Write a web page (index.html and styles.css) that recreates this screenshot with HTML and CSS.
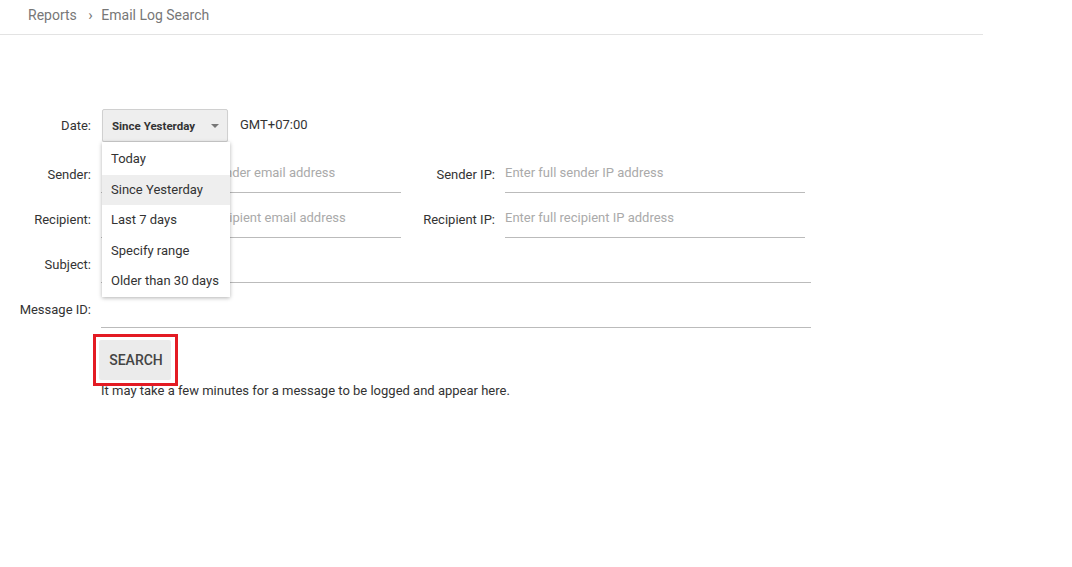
FILE: index.html
```html
<!DOCTYPE html>
<html lang="en">
<head>
    <meta charset="UTF-8">
    <meta name="viewport" content="width=device-width, initial-scale=1.0">
    <title>Email Log Search</title>
    <link rel="stylesheet" href="styles.css">
</head>
<body>
    <div class="header">
        <span class="crumb">Reports</span>
        <span class="crumb-sep">&#8250;</span>
        <span class="crumb current">Email Log Search</span>
    </div>

    <form class="search-form">
        <div class="row date-row">
            <label class="label">Date:</label>
            <div class="select-wrap">
                <div class="select">
                    <span>Since Yesterday</span>
                    <span class="arrow"></span>
                </div>
                <ul class="menu">
                    <li>Today</li>
                    <li class="active">Since Yesterday</li>
                    <li>Last 7 days</li>
                    <li>Specify range</li>
                    <li>Older than 30 days</li>
                </ul>
            </div>
            <span class="tz">GMT+07:00</span>
        </div>

        <div class="row">
            <label class="label">Sender:</label>
            <input class="field left" type="text" placeholder="Enter sender email address">
            <label class="label label-ip">Sender IP:</label>
            <input class="field" type="text" placeholder="Enter full sender IP address">
        </div>

        <div class="row">
            <label class="label">Recipient:</label>
            <input class="field left" type="text" placeholder="Enter recipient email address">
            <label class="label label-ip">Recipient IP:</label>
            <input class="field" type="text" placeholder="Enter full recipient IP address">
        </div>

        <div class="row">
            <label class="label">Subject:</label>
            <input class="field wide" type="text">
        </div>

        <div class="row">
            <label class="label">Message ID:</label>
            <input class="field wide" type="text">
        </div>

        <div class="actions">
            <div class="btn-wrap">
                <button type="button" class="btn">SEARCH</button>
                <span class="highlight"></span>
            </div>
            <p class="note">It may take a few minutes for a message to be logged and appear here.</p>
        </div>
    </form>
</body>
</html>
```

FILE: styles.css
```css
body {
    font-family: Roboto, "Noto Sans", Arial, sans-serif;
    font-size: 13px;
    color: #333;
    background-color: #fff;
    margin: 0;
    padding: 0;
}

.header {
    width: 983px;
    height: 35px;
    box-sizing: border-box;
    padding: 6px 0 0 28px;
    border-bottom: 1px solid #e3e3e3;
    font-size: 14px;
    color: #777;
}

.crumb-sep {
    display: inline-block;
    margin: 0 5px 0 8px;
    font-size: 15px;
}

.search-form {
    padding-top: 74px;
}

.row {
    display: flex;
    align-items: center;
    margin-bottom: 14px;
}

.date-row {
    margin-bottom: 20px;
}

.label {
    width: 91px;
    text-align: right;
    padding-right: 10px;
    padding-bottom: 7px;
    box-sizing: content-box;
}

.date-row .label {
    padding-bottom: 0;
}

.label-ip {
    width: 104px;
    padding-right: 10px;
    box-sizing: border-box;
}

.field {
    width: 300px;
    height: 31px;
    box-sizing: border-box;
    padding: 0 0 10px 0;
    border: none;
    border-bottom: 1px solid #bbb;
    font-family: inherit;
    font-size: 13px;
    color: #333;
    outline: none;
}

.field.left {
    padding-left: 77px;
}

.field::placeholder {
    color: #aaa;
}

.field.wide {
    width: 710px;
}

.select-wrap {
    position: relative;
    margin-left: 1px;
}

.select {
    width: 126px;
    height: 33px;
    box-sizing: border-box;
    display: flex;
    align-items: center;
    justify-content: space-between;
    padding: 0 8px 0 9px;
    background-color: #eee;
    border: 1px solid #d0d0d0;
    border-radius: 2px;
    box-shadow: 0 1px 1px rgba(0, 0, 0, 0.08);
    font-size: 11.5px;
    font-weight: bold;
    color: #333;
}

.arrow {
    width: 0;
    height: 0;
    border-left: 4px solid transparent;
    border-right: 4px solid transparent;
    border-top: 4px solid #777;
}

.menu {
    position: absolute;
    top: 33px;
    left: 0;
    width: 128px;
    margin: 0;
    padding: 2px 0 0;
    list-style: none;
    background-color: #fff;
    box-shadow: 0 1px 4px rgba(0, 0, 0, 0.3);
    z-index: 2;
}

.menu li {
    height: 30.5px;
    line-height: 30.5px;
    padding-left: 9px;
    color: #333;
}

.menu li.active {
    background-color: #eee;
}

.tz {
    margin-left: 12px;
    margin-top: -2px;
}

.actions {
    padding-left: 99px;
    margin-top: -2px;
}

.btn-wrap {
    position: relative;
    display: inline-block;
}

.btn {
    display: block;
    width: 72px;
    height: 40px;
    border: none;
    border-radius: 2px;
    background-color: #ebebeb;
    font-family: inherit;
    font-size: 14px;
    font-weight: 500;
    color: #444;
    padding: 0 0 0 2px;
    cursor: pointer;
}

.highlight {
    position: absolute;
    top: -6px;
    left: -6px;
    width: 85px;
    height: 52px;
    box-sizing: border-box;
    border: 3px solid #e31b23;
}

.note {
    margin: 2px 0 0 2px;
    line-height: 18px;
    color: #333;
}
```
